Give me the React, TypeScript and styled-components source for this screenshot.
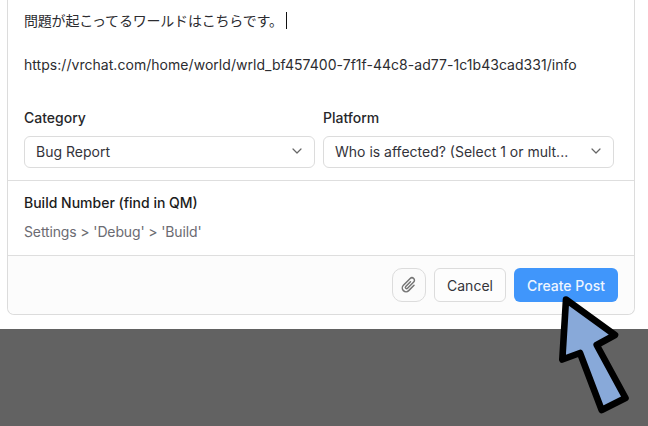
import React from 'react';
import styled, { createGlobalStyle } from 'styled-components';

const GlobalStyle = createGlobalStyle`
  html, body { margin: 0; padding: 0; background: #fff; }
  body { font-family: Inter, "Noto Sans CJK JP", sans-serif; }
`;

const Page = styled.div`
  position: relative;
  width: 648px;
  height: 426px;
  overflow: hidden;
  display: flex;
  flex-direction: column;
`;

const Top = styled.div`
  height: 329px;
  background: #fff;
  padding: 0 13px 0 7px;
  box-sizing: border-box;
`;

const Bottom = styled.div`
  height: 97px;
  background: #626262;
`;

const Card = styled.div`
  height: 315px;
  box-sizing: border-box;
  border: 1px solid #dcdcdc;
  border-top: 0;
  border-radius: 0 0 7px 7px;
  display: flex;
  flex-direction: column;
  background: #fff;
`;

const Editor = styled.div`
  height: 181px;
  box-sizing: border-box;
  padding: 0 16px;
  border-bottom: 1px solid #dedede;
  display: flex;
  flex-direction: column;
`;

const Line = styled.div<{ $top: number; $spacing: number }>`
  margin-top: ${p => p.$top}px;
  height: 22px;
  line-height: 22px;
  font-size: 14px;
  letter-spacing: ${p => p.$spacing}px;
  color: #2c2c30;
  white-space: nowrap;
`;

const Caret = styled.span`
  display: inline-block;
  width: 1px;
  height: 17px;
  background: #111;
  margin-left: 3px;
  vertical-align: -3px;
`;

const Fields = styled.div`
  display: grid;
  grid-template-columns: 291px 291px;
  column-gap: 8px;
  margin-top: 32px;
`;

const Field = styled.div`
  display: flex;
  flex-direction: column;
  gap: 8px;
`;

const FieldLabel = styled.div`
  height: 20px;
  line-height: 20px;
  font-size: 14px;
  font-weight: 450;
  color: #27272a;
`;

const Select = styled.div`
  height: 32px;
  box-sizing: border-box;
  border: 1px solid #dcdcdc;
  border-radius: 6px;
  padding: 0 11px 2px;
  display: flex;
  align-items: center;
  justify-content: space-between;
  font-size: 14px;
  color: #33333a;
  white-space: nowrap;
`;

const Chevron = styled.svg`
  width: 12px;
  height: 12px;
  fill: none;
  stroke: #666;
  stroke-width: 1.2;
  stroke-linecap: round;
  stroke-linejoin: round;
`;

const Build = styled.div`
  height: 75px;
  box-sizing: border-box;
  padding: 12px 16px 0;
  border-bottom: 1px solid #dedede;
`;

const BuildTitle = styled.div`
  height: 20px;
  line-height: 20px;
  font-size: 14px;
  font-weight: 500;
  color: #1c1c20;
`;

const BuildHint = styled.div`
  margin-top: 9px;
  height: 20px;
  line-height: 20px;
  font-size: 14px;
  letter-spacing: -0.13px;
  color: #6b6b72;
`;

const Footer = styled.div`
  flex: 1;
  background: #fcfcfc;
  border-radius: 0 0 7px 7px;
  padding: 12px 16px 0 0;
  display: flex;
  justify-content: flex-end;
  align-items: flex-start;
  gap: 8px;
`;

const Button = styled.div`
  height: 34px;
  box-sizing: border-box;
  border-radius: 6px;
  display: flex;
  align-items: center;
  justify-content: center;
  font-size: 14px;
`;

const AttachButton = styled(Button)`
  width: 34px;
  border: 1px solid #dcdcdc;
  border-radius: 10px;
  background: #fbfbfb;
`;

const CancelButton = styled(Button)`
  width: 72px;
  border: 1px solid #dcdcdc;
  background: #fdfdfd;
  color: #34343a;
`;

const PostButton = styled(Button)`
  width: 104px;
  background: #4096fb;
  color: #eef5ff;
  font-weight: 450;
`;

const Clip = styled.svg`
  width: 20px;
  height: 20px;
  fill: none;
  stroke: #757575;
  stroke-width: 1.8;
  stroke-linecap: round;
  stroke-linejoin: round;
`;

const Pointer = styled.svg`
  position: absolute;
  left: 550px;
  top: 290px;
  width: 90px;
  height: 130px;
`;

export default function App() {
  return (
    <Page>
      <GlobalStyle />
      <Top>
        <Card>
          <Editor>
            <Line $top={10} $spacing={-0.2}>問題が起こってるワールドはこちらです。<Caret /></Line>
            <Line $top={22} $spacing={0.04}>https://vrchat.com/home/world/wrld_bf457400-7f1f-44c8-ad77-1c1b43cad331/info</Line>
            <Fields>
              <Field>
                <FieldLabel>Category</FieldLabel>
                <Select>
                  Bug Report
                  <Chevron viewBox="0 0 12 12"><path d="M2 4l4 4 4-4" /></Chevron>
                </Select>
              </Field>
              <Field>
                <FieldLabel>Platform</FieldLabel>
                <Select>
                  Who is affected? (Select 1 or mult...
                  <Chevron viewBox="0 0 12 12"><path d="M2 4l4 4 4-4" /></Chevron>
                </Select>
              </Field>
            </Fields>
          </Editor>
          <Build>
            <BuildTitle>Build Number (find in QM)</BuildTitle>
            <BuildHint>Settings &gt; 'Debug' &gt; 'Build'</BuildHint>
          </Build>
          <Footer>
            <AttachButton>
              <Clip viewBox="0 0 24 24">
                <path
                  transform="rotate(45 12 12)"
                  d="M10.5 8v8a1.5 1.5 0 0 0 3 0V5.5a3 3 0 0 0-6 0V17a4.5 4.5 0 0 0 9 0V8"
                />
              </Clip>
            </AttachButton>
            <CancelButton>Cancel</CancelButton>
            <PostButton>Create Post</PostButton>
          </Footer>
        </Card>
      </Top>
      <Bottom />
      <Pointer viewBox="0 0 90 130">
        <path
          d="M16 9.5 L65 45 L46.7 55 L75.5 108 L51.7 120 L30 63 L12.3 69.5 Z"
          fill="#88a9d9"
          stroke="#000"
          strokeWidth="6.6"
          strokeLinejoin="round"
        />
      </Pointer>
    </Page>
  );
}
